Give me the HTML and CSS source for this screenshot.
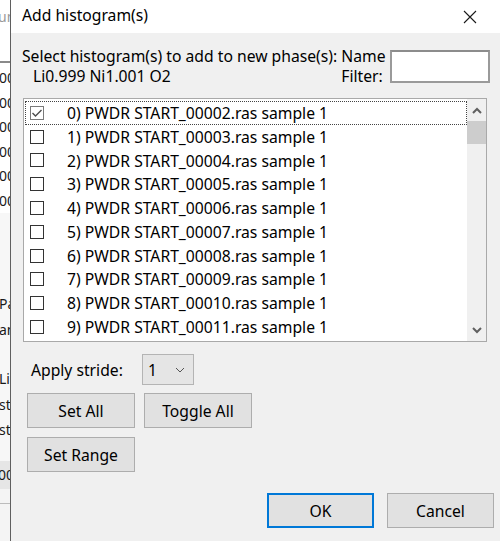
FILE: index.html
```html
<!DOCTYPE html>
<html>
<head>
<meta charset="utf-8">
<link rel="stylesheet" href="styles.css">
</head>
<body>
<div class="screen">
  <div class="behind">
    <div class="b-top"><span class="b-faint">un</span></div>
    <div class="b-rows">
      <div class="b-line">00</div>
      <div class="b-line">00</div>
      <div class="b-line">00</div>
      <div class="b-line">00</div>
      <div class="b-line">00</div>
      <div class="b-line">00</div>
    </div>
    <div class="b-mid">
      <div class="b-line">Pa</div>
      <div class="b-line">an</div>
      <div class="b-gap"></div>
      <div class="b-line">Lis</div>
      <div class="b-line">st</div>
      <div class="b-line">st</div>
    </div>
    <div class="b-box"><span>00</span></div>
    <div class="b-foot"></div>
  </div>

  <div class="dialog">
    <div class="titlebar">
      <span class="title">Add histogram(s)</span>
      <svg class="close" width="14" height="14" viewBox="0 0 14 14"><path d="M1 1 L13 13 M13 1 L1 13" stroke="#1a1a1a" stroke-width="1.1" fill="none"/></svg>
    </div>
    <div class="content">
      <div class="header">
        <div class="prompt">
          <div>Select histogram(s) to add to new phase(s):</div>
          <div class="phase">Li0.999 Ni1.001 O2</div>
        </div>
        <div class="filter-label">Name<br>Filter:</div>
        <div class="filter-input"></div>
      </div>

      <div class="listbox">
        <div class="rows">
          <div class="row focus"><span class="cb checked"><svg width="14" height="14" viewBox="0 0 14 14"><path d="M2.5 7 L5.5 10 L11.5 4" stroke="#4d4d4d" stroke-width="1.4" fill="none"/></svg></span><span class="label">0) PWDR START_00002.ras sample 1</span></div>
          <div class="row"><span class="cb"></span><span class="label">1) PWDR START_00003.ras sample 1</span></div>
          <div class="row"><span class="cb"></span><span class="label">2) PWDR START_00004.ras sample 1</span></div>
          <div class="row"><span class="cb"></span><span class="label">3) PWDR START_00005.ras sample 1</span></div>
          <div class="row"><span class="cb"></span><span class="label">4) PWDR START_00006.ras sample 1</span></div>
          <div class="row"><span class="cb"></span><span class="label">5) PWDR START_00007.ras sample 1</span></div>
          <div class="row"><span class="cb"></span><span class="label">6) PWDR START_00008.ras sample 1</span></div>
          <div class="row"><span class="cb"></span><span class="label">7) PWDR START_00009.ras sample 1</span></div>
          <div class="row"><span class="cb"></span><span class="label">8) PWDR START_00010.ras sample 1</span></div>
          <div class="row"><span class="cb"></span><span class="label">9) PWDR START_00011.ras sample 1</span></div>
        </div>
        <div class="scrollbar">
          <div class="arrow"><svg width="10" height="7" viewBox="0 0 10 7"><path d="M1 6 L5 2 L9 6" stroke="#606060" stroke-width="2" fill="none"/></svg></div>
          <div class="thumb"></div>
          <div class="track"></div>
          <div class="arrow"><svg width="10" height="7" viewBox="0 0 10 7"><path d="M1 1 L5 5 L9 1" stroke="#606060" stroke-width="2" fill="none"/></svg></div>
        </div>
      </div>

      <div class="stride">
        <span class="stride-label">Apply stride:</span>
        <div class="combo"><span>1</span><svg width="10" height="6" viewBox="0 0 10 6"><path d="M1 1 L5 5 L9 1" stroke="#555" stroke-width="1" fill="none"/></svg></div>
      </div>
      <div class="btnrow">
        <div class="btn">Set All</div>
        <div class="btn">Toggle All</div>
      </div>
      <div class="btnrow">
        <div class="btn">Set Range</div>
      </div>
      <div class="spacer"></div>
      <div class="footer">
        <div class="btn default">OK</div>
        <div class="btn">Cancel</div>
      </div>
    </div>
  </div>
</div>
</body>
</html>
```

FILE: styles.css
```css
* { box-sizing: border-box; }
html, body { margin: 0; padding: 0; }
body {
  width: 500px;
  height: 541px;
  overflow: hidden;
  font-family: "Noto Sans", "Open Sans", sans-serif;
  font-size: 15.7px;
  color: #000;
}
.screen {
  display: flex;
  width: 500px;
  height: 541px;
}

/* background window strip */
.behind {
  width: 10px;
  flex: none;
  overflow: hidden;
  background: #f4f4f4;
  display: flex;
  flex-direction: column;
  font-size: 14px;
  color: #1a1a1a;
  white-space: nowrap;
}
.b-top {
  height: 63px;
  background: #fff;
  border-bottom: 2px solid #8a8a8a;
  padding-top: 7px;
}
.b-faint { color: #9a9a9a; margin-left: -2px; }
.b-rows {
  background: #fff;
  padding-top: 3px;
  height: 150px;
}
.b-line {
  height: 24.5px;
  line-height: 24.5px;
  margin-left: -1px;
}
.b-mid {
  padding-top: 78px;
  height: 250px;
  background: #f7f7f7;
}
.b-mid .b-line { height: 25.5px; line-height: 25.5px; }
.b-gap { height: 24px; }
.b-box {
  height: 28px;
  line-height: 28px;
  background: #e6e6e6;
  margin-top: -2px;
}
.b-box span { margin-left: -2px; }
.b-foot {
  flex: 1;
  border-top: 14px solid #f4f4f4;
  background: #f4f4f4;
  box-shadow: inset 0 1px 0 #bcbcbc;
}

/* dialog */
.dialog {
  flex: 1;
  min-width: 0;
  display: flex;
  flex-direction: column;
  background: #f0f0f0;
  border-left: 1px solid #5f5f5f;
}
.titlebar {
  height: 33px;
  background: #fff;
  display: flex;
  align-items: center;
  justify-content: space-between;
  padding: 0 23px 4px 11px;
}
.close { display: block; margin-top: 4px; }

.content {
  flex: 1;
  min-width: 0;
  display: flex;
  flex-direction: column;
  padding: 12px 6px 13px 11px;
}
.header {
  display: flex;
  align-items: flex-start;
  height: 53px;
}
.prompt { line-height: 20px; padding-top: 1px; white-space: nowrap; }
.phase { padding-left: 11px; }
.filter-label {
  text-align: left;
  line-height: 20px;
  padding-top: 1px;
  margin-left: 4px;
}
.filter-input {
  width: 100px;
  height: 33px;
  margin-top: 5px;
  margin-left: auto;
  margin-right: 4px;
  background: #fff;
  border: 2px solid #9a9a9a;
  border-top-color: #8c8c8c;
}

.listbox {
  margin-left: 1px;
  width: 464px;
  height: 244px;
  background: #fff;
  border: 1px solid #a9a9a9;
  display: flex;
  padding: 2px 0 2px 1px;
}
.rows { flex: 1; min-width: 0; }
.row {
  height: 23.8px;
  display: flex;
  align-items: center;
  border: 1px solid transparent;
  padding-left: 4px;
}
.row.focus { border: 1px dotted #444; }
.cb {
  width: 14px;
  height: 14px;
  border: 1px solid #333;
  background: #fff;
  flex: none;
  display: flex;
}
.cb.checked { border-color: #7a7a7a; }
.cb svg { margin: -1px; }
.label { margin-left: 23px; white-space: nowrap; }
.scrollbar {
  width: 19px;
  background: #f0f0f0;
  display: flex;
  flex-direction: column;
  margin: -2px 0 -2px 0;
}
.arrow {
  height: 22px;
  display: flex;
  align-items: center;
  justify-content: center;
}
.thumb { height: 23px; background: #cdcdcd; }
.track { flex: 1; }

.stride {
  display: flex;
  align-items: center;
  margin-top: 12px;
  margin-left: 9px;
  height: 31px;
}
.stride-label { width: 111px; }
.combo {
  width: 52px;
  height: 31px;
  background: #e5e5e5;
  border: 1px solid #b4b4b4;
  display: flex;
  align-items: center;
  justify-content: space-between;
  padding: 0 8px 0 5px;
}
.btnrow {
  display: flex;
  gap: 9px;
  margin-left: 5px;
  margin-top: 8px;
}
.btnrow + .btnrow { margin-top: 9px; }
.btn {
  width: 108px;
  height: 35px;
  background: #e1e1e1;
  border: 1px solid #adadad;
  display: flex;
  align-items: center;
  justify-content: center;
}
.spacer { flex: 1; }
.footer {
  display: flex;
  justify-content: flex-end;
  gap: 13px;
}
.footer .btn { width: 107px; }
.btn.default { border: 2px solid #0078d7; }
```
